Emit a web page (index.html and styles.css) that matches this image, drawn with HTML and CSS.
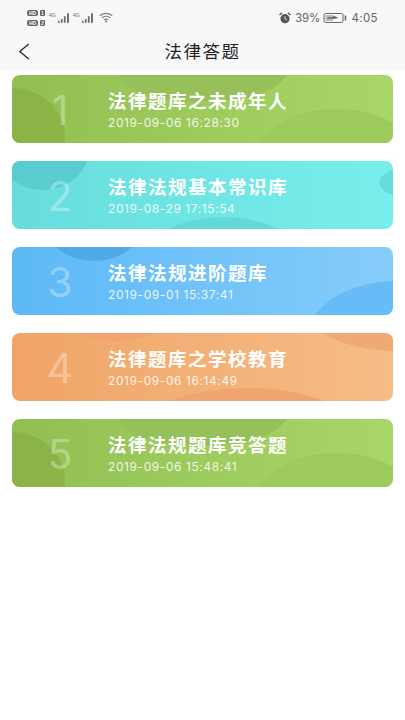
FILE: index.html
```html
<!DOCTYPE html>
<html lang="zh-CN">
<head>
<meta charset="utf-8">
<title>法律答题</title>
<link rel="stylesheet" href="styles.css">
</head>
<body>
<header class="top">
  <div class="status">
    <div class="status-left">
      <div class="sims">
        <div class="sim"><span class="hd">HD</span><span class="slot">1</span></div>
        <div class="sim"><span class="hd">HD</span><span class="slot">2</span></div>
      </div>
      <div class="signal"><span class="net">4G</span>
        <svg class="bars" viewBox="0 0 14 10"><path d="M1 8h1.800v2H1zM4.200 6h1.800v4H4.200zM7.400 3h1.800v7H7.400zM10.800 0h2v10h-2z"/></svg>
      </div>
      <div class="signal"><span class="net">4G</span>
        <svg class="bars" viewBox="0 0 14 10"><path d="M1 8h1.800v2H1zM4.200 6h1.800v4H4.200zM7.400 3h1.800v7H7.400zM10.800 0h2v10h-2z"/></svg>
      </div>
      <svg class="wifi" viewBox="0 0 15 11"><path d="M.8 3.600C4.500.3 10.500.3 14.200 3.600M3 5.800c2.600-2.200 6.400-2.200 9 0M5.200 8c1.300-1 3.300-1 4.600 0" fill="none" stroke="#666" stroke-width="1.100"/><circle cx="7.500" cy="9.800" r="1" fill="#666"/></svg>
    </div>
    <div class="status-right">
      <svg class="alarm" viewBox="0 0 12 12"><circle cx="6" cy="6.700" r="4.600" fill="#555"/><path d="M.5 3 3 .8M11.500 3 9 .8" stroke="#555" stroke-width="1.400" fill="none"/><path d="M6 4v2.900l2 1" stroke="#ddd" stroke-width=".9" fill="none"/></svg>
      <span class="pct">39%</span>
      <svg class="battery" viewBox="0 0 23 10"><rect x=".5" y=".5" width="19" height="9" rx="1.500" fill="#f8f8f8" stroke="#666"/><rect x="2" y="2" width="7.500" height="6" fill="#bbb"/><path d="M4 4.300h6l-.5-1.800 5.500 2.500-5.500 1 .5-.5H4z" fill="#555"/><rect x="21.200" y="2.500" width="1.500" height="5" fill="#666"/></svg>
      <span class="time">4:05</span>
    </div>
  </div>
  <nav class="nav">
    <svg class="back" viewBox="0 0 12 18"><path d="M11 1 1.500 9 11 17" fill="none" stroke="#222" stroke-width="1.300"/></svg>
    <h1 class="title">法律答题</h1>
  </nav>
</header>
<main class="list">
  <article class="card green">
    <svg class="deco" viewBox="0 0 381 68" preserveAspectRatio="none"><ellipse class="s1" cx="190" cy="-5" rx="85" ry="32"/><ellipse class="s2" cx="325" cy="90" rx="85" ry="56"/><ellipse class="s3" cx="0" cy="62" rx="53" ry="49"/></svg>
    <div class="num">1</div>
    <div class="text"><div class="name">法律题库之未成年人</div><div class="date">2019-09-06 16:28:30</div></div>
  </article>
  <article class="card teal">
    <svg class="deco" viewBox="0 0 381 68" preserveAspectRatio="none"><ellipse class="s3" cx="31" cy="-12" rx="46" ry="41"/><ellipse class="s2" cx="395" cy="21.500" rx="28" ry="14.500"/><ellipse class="s1" cx="211" cy="100" rx="80" ry="44"/></svg>
    <div class="num">2</div>
    <div class="text"><div class="name">法律法规基本常识库</div><div class="date">2019-08-29 17:15:54</div></div>
  </article>
  <article class="card blue">
    <svg class="deco" viewBox="0 0 381 68" preserveAspectRatio="none"><ellipse class="s3" cx="82" cy="-25" rx="50" ry="39"/><ellipse class="s2" cx="385" cy="92" rx="90" ry="58"/></svg>
    <div class="num">3</div>
    <div class="text"><div class="name">法律法规进阶题库</div><div class="date">2019-09-01 15:37:41</div></div>
  </article>
  <article class="card orange">
    <svg class="deco" viewBox="0 0 381 68" preserveAspectRatio="none"><ellipse class="s1" cx="103" cy="-30" rx="60" ry="39"/><ellipse class="s2" cx="385" cy="-22" rx="88" ry="40"/><ellipse class="s1" cx="235" cy="95" rx="104" ry="40"/></svg>
    <div class="num">4</div>
    <div class="text"><div class="name">法律题库之学校教育</div><div class="date">2019-09-06 16:14:49</div></div>
  </article>
  <article class="card green">
    <svg class="deco" viewBox="0 0 381 68" preserveAspectRatio="none"><ellipse class="s1" cx="190" cy="-5" rx="85" ry="32"/><ellipse class="s2" cx="325" cy="90" rx="85" ry="56"/><ellipse class="s3" cx="0" cy="62" rx="53" ry="49"/></svg>
    <div class="num">5</div>
    <div class="text"><div class="name">法律法规题库竞答题</div><div class="date">2019-09-06 15:48:41</div></div>
  </article>
</main>
</body>
</html>
```
FILE: styles.css
```css
* { box-sizing: border-box; margin: 0; padding: 0; }
html, body { height: 100%; background: #fff; }
body { font-family: "Noto Sans CJK SC", "Noto Sans", sans-serif; width: 405px; overflow: hidden; }

.top { background: #f8f8f8; height: 70px; display: flex; flex-direction: column; }
.status { height: 35px; display: flex; justify-content: space-between; align-items: center; padding: 0 27px; }
.status-left, .status-right { display: flex; align-items: center; }
.status-left { gap: 3px; }
.status-right { gap: 3px; color: #666; font-family: "Inter", sans-serif; font-size: 11.500px; }
.sims { display: flex; flex-direction: column; gap: 4px; margin-right: 1px; }
.sim { display: flex; align-items: center; gap: 2px; height: 6px; }
.hd { background: #666; color: #f8f8f8; border-radius: 2px; width: 11px; height: 6px; font: 700 5px/6px "Liberation Sans", sans-serif; text-align: center; }
.slot { background: #666; color: #f8f8f8; border-radius: 1px; width: 5px; height: 6px; font: 700 5px/6px "Liberation Sans", sans-serif; text-align: center; }
.signal { display: flex; align-items: flex-start; height: 11px; margin-top: 0; }
.net { font: 5px/7px "Liberation Sans", sans-serif; color: #666; width: 8px; }
.bars { width: 13px; height: 10px; fill: #666; margin-top: 1px; }
.wifi { width: 14px; height: 11px; margin-left: 2px; }
.alarm { width: 12px; height: 12px; margin-right: 1px; }
.battery { width: 24px; height: 10px; }
.time { margin-left: 1px; letter-spacing: .4px; }

.nav { height: 35px; display: flex; align-items: center; justify-content: center; position: relative; padding-bottom: 5px; }
.back { position: absolute; left: 18px; top: 8px; width: 12px; height: 17px; }
.title { font-size: 17.500px; font-weight: 400; color: #222; letter-spacing: 1.500px; }

.list { display: flex; flex-direction: column; gap: 18px; padding: 5px 12px; }
.card { position: relative; height: 68px; border-radius: 8px; overflow: hidden; display: flex; align-items: center; color: #fff; }
.green { background: linear-gradient(90deg, #91bf52, #a8d669); }
.teal { background: linear-gradient(90deg, #66dcdc, #78efec); }
.blue { background: linear-gradient(90deg, #5cb9f6, #86ccfb); }
.orange { background: linear-gradient(90deg, #f0a468, #f6bd86); }
.deco { position: absolute; inset: 0; width: 100%; height: 100%; }
.green .s1 { fill: #96c15a; }
.green .s2 { fill: #9dca5d; }
.green .s3 { fill: #8ab446; }
.teal .s1 { fill: #62d8da; }
.teal .s2 { fill: #66dcdc; }
.teal .s3 { fill: #5accd0; }
.blue .s2 { fill: #66bcf7; }
.blue .s3 { fill: #4fa9e6; }
.orange .s1 { fill: #f0a56e; }
.orange .s2 { fill: #f1a974; }
.num { position: relative; width: 96px; padding-top: 3px; text-align: center; font: 400 41px/1 "Inter", sans-serif; color: rgba(255, 255, 255, .33); }
.text { position: relative; padding-top: 3px; }
.name { font-size: 18.500px; font-weight: 700; letter-spacing: 1.500px; line-height: 18px; white-space: nowrap; }
.date { font-family: "Inter", sans-serif; font-size: 12px; letter-spacing: .58px; line-height: 16px; margin-top: 6px; color: rgba(255, 255, 255, .88); white-space: nowrap; }
```
